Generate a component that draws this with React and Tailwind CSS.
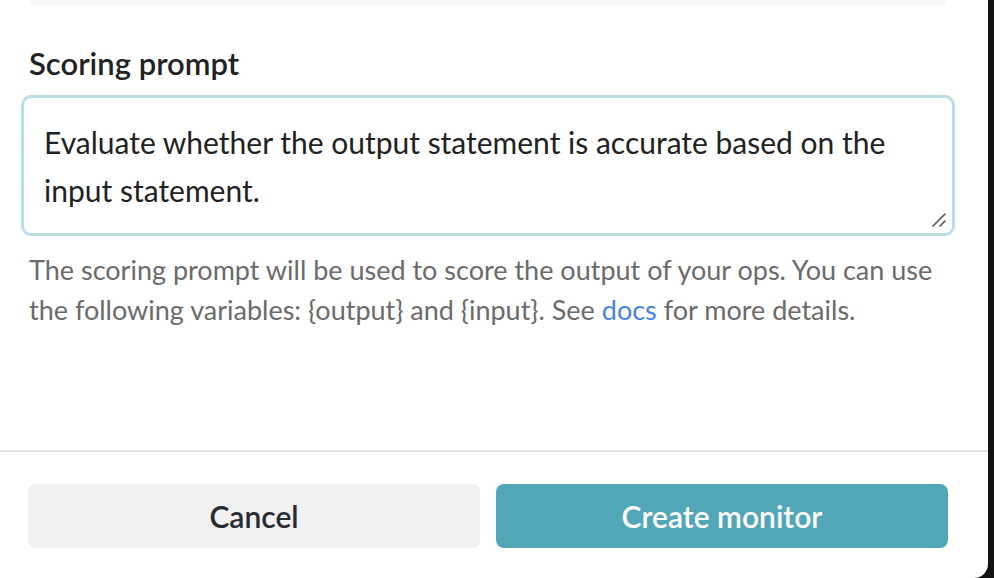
import React from 'react';

export default function App() {
  return (
    <div className="w-[994px] h-[578px] overflow-hidden bg-[#141210] flex font-['Lato',sans-serif]">
      <div className="w-[988px] h-full bg-white rounded-br-[14px] flex flex-col">
        {/* bottom of previous field */}
        <div className="ml-[30px] w-[916px] h-[5px] bg-[#f7f7f7] rounded-b-[10px]" />

        <div className="px-[21px]">
          <h2 className="mt-[38px] ml-[8px] text-[31px] leading-[40px] font-semibold text-[#222222]">
            Scoring prompt
          </h2>
          <div className="relative mt-[12px] w-[934px]">
            <textarea
              className="block w-[934px] h-[141px] resize-none border-[3px] border-[#b9dfe5] rounded-[10px] pl-[20px] pr-[24px] pt-[20px] text-[30px] leading-[48px] text-[#222222] outline-none"
              defaultValue="Evaluate whether the output statement is accurate based on the input statement."
            />
            <svg className="absolute right-[8px] bottom-[8px] w-[16px] h-[16px]" viewBox="0 0 16 16">
              <path d="M2 14 L14 2 M9 14 L14 9" stroke="#555" strokeWidth="1.6" strokeLinecap="round" />
            </svg>
          </div>
          <p className="mt-[14px] ml-[8px] w-[920px] text-[27px] leading-[40px] text-[#6b6b6b]">
            The scoring prompt will be used to score the output of your ops. You can use the following
            variables: {'{output}'} and {'{input}'}. See <span className="text-[#4a82df]">docs</span> for more details.
          </p>
        </div>

        <div className="mt-auto border-t-2 border-[#e4e4e4] pt-[32px] pb-[30px] pl-[28px] pr-[40px] flex gap-[16px]">
          <button className="flex-1 h-[64px] rounded-[8px] bg-[#f1f1f1] text-[30px] font-semibold text-[#2a2b30]">
            Cancel
          </button>
          <button className="flex-1 h-[64px] rounded-[8px] bg-[#51a7b8] text-[30px] font-semibold text-white">
            Create monitor
          </button>
        </div>
      </div>
    </div>
  );
}
